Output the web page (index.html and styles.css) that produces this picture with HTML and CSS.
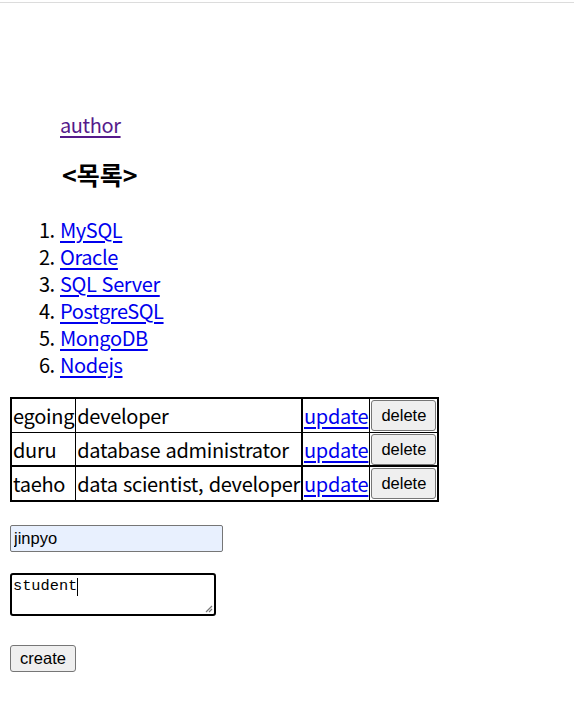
FILE: index.html
```html
<!DOCTYPE html>
<html lang="ko">
<head>
<meta charset="utf-8">
<title>목록</title>
<link rel="stylesheet" href="styles.css">
</head>
<body>
<div class="topline"></div>
<main class="page">
  <ul class="nav">
    <li><a class="visited" href="#">author</a></li>
    <li><h3 class="title">&lt;목록&gt;</h3></li>
  </ul>
  <ol class="topics">
    <li><a href="#">MySQL</a></li>
    <li><a href="#">Oracle</a></li>
    <li><a href="#">SQL Server</a></li>
    <li><a href="#">PostgreSQL</a></li>
    <li><a href="#">MongoDB</a></li>
    <li><a href="#">Nodejs</a></li>
  </ol>
  <table class="authors">
    <tr class="r1">
      <td class="c1">egoing</td>
      <td class="c2">developer</td>
      <td class="c3"><a href="#">update</a></td>
      <td class="c4"><button class="btn" type="button">delete</button></td>
    </tr>
    <tr class="r2">
      <td class="c1">duru</td>
      <td class="c2">database administrator</td>
      <td class="c3"><a href="#">update</a></td>
      <td class="c4"><button class="btn" type="button">delete</button></td>
    </tr>
    <tr class="r3">
      <td class="c1">taeho</td>
      <td class="c2">data scientist, developer</td>
      <td class="c3"><a href="#">update</a></td>
      <td class="c4"><button class="btn" type="button">delete</button></td>
    </tr>
  </table>
  <form class="create-form">
    <input class="name" type="text" value="jinpyo">
    <div class="ta"><span class="ta-text">student</span><span class="caret"></span>
      <svg class="grip" width="8" height="8" viewBox="0 0 8 8"><path d="M7 1L1 7M7 4L4 7" stroke="#777" stroke-width="1.2" fill="none"/></svg>
    </div>
    <button class="btn create" type="button">create</button>
  </form>
</main>
</body>
</html>
```
FILE: styles.css
```css
html, body {
  margin: 0;
  padding: 0;
  background: #fff;
}
body {
  font-family: "Noto Sans CJK KR", "Noto Sans", sans-serif;
  font-size: 20px;
  line-height: 27px;
  letter-spacing: -0.4px;
  color: #000;
}
.topline {
  height: 2px;
  border-bottom: 1px solid #dcdcdc;
}
.page {
  padding: 0 10px;
}
a {
  color: #0000ee;
  text-decoration: underline;
  text-underline-offset: 3px;
}
a.visited {
  color: #551a8b;
}
.nav {
  list-style: none;
  margin: 0;
  padding: 108px 0 0 50px;
}
.title {
  margin: 21px 0 0 2px;
  font-size: 25px;
  line-height: 30px;
  font-weight: 700;
  letter-spacing: 0;
}
.topics {
  margin: 27px 0 0;
  padding-left: 50px;
}
.authors {
  margin-top: 19px;
  border-collapse: collapse;
  border: 2px solid #000;
  letter-spacing: -0.3px;
}
.authors td {
  border: 1px solid #000;
  padding: 0 1px;
  height: 32px;
  white-space: nowrap;
}
.authors tr.r1 td,
.authors tr.r3 td {
  height: 33px;
}
.authors tr.r3 td {
  border-top: 2px solid #000;
}
.authors td.c3 {
  border-left: 2px solid #000;
}
.btn {
  font-family: "Liberation Sans", Arial, sans-serif;
  font-size: 16.5px;
  letter-spacing: 0;
  color: #000;
  background: #efefef;
  border: 1px solid #767676;
  border-radius: 3px;
  padding: 2px 8px;
  height: 31px;
  display: block;
}
.c4 .btn {
  width: 65px;
}
.create-form {
  display: flex;
  flex-direction: column;
  align-items: flex-start;
  margin-top: 23px;
}
.name {
  box-sizing: border-box;
  width: 213px;
  height: 27px;
  margin: 0;
  padding: 0 3px;
  font-family: "Liberation Sans", Arial, sans-serif;
  font-size: 16.5px;
  letter-spacing: 0;
  color: #000;
  background: #e8f0fe;
  border: 1px solid #767676;
  border-radius: 2px;
}
.ta {
  box-sizing: border-box;
  position: relative;
  width: 206px;
  height: 43px;
  margin-top: 21px;
  border: 2px solid #000;
  border-radius: 3px;
  padding: 2px 1px;
  font-family: "Liberation Mono", monospace;
  font-size: 15.3px;
  letter-spacing: 0;
  line-height: 19px;
  display: flex;
  align-items: flex-start;
}
.caret {
  display: inline-block;
  width: 1px;
  height: 18px;
  background: #000;
  margin-top: 1px;
}
.grip {
  position: absolute;
  right: 1px;
  bottom: 1px;
}
.create {
  margin-top: 29px;
  width: 66px;
  height: 27px;
  padding: 0 6px;
}
```
